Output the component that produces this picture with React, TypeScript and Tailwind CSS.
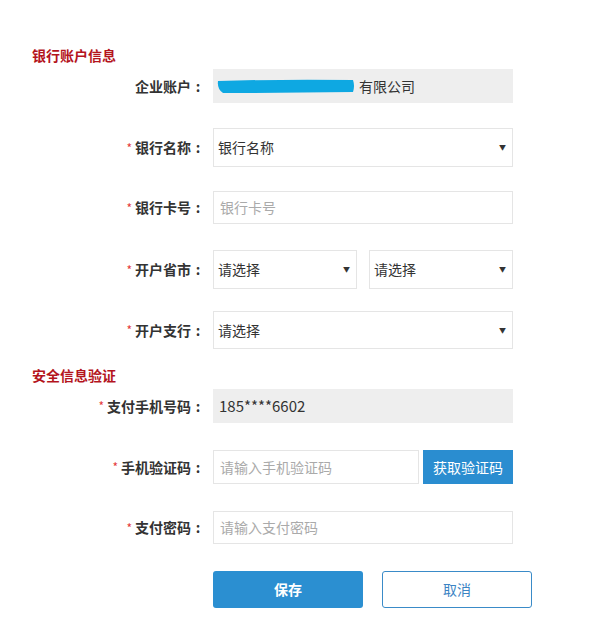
import React from "react";

const FONT = { fontFamily: '"Noto Sans CJK SC", "Noto Sans", sans-serif' };

function Label({ text, required }: { text: string; required?: boolean }) {
  return (
    <div className="flex w-[205px] shrink-0 items-center justify-end text-[14px] font-bold text-[#333]">
      {required && <span className="mr-[3px] text-[12px] font-normal text-[#e4393c]">*</span>}
      <span>{text}</span>
      <span className="inline-block w-[14px] text-center">:</span>
    </div>
  );
}

function Arrow() {
  return <span className="ml-auto text-[7px] leading-none text-[#333]">▼</span>;
}

function Select({ value, className }: { value: string; className: string }) {
  return (
    <div className={`flex items-center border border-[#e5e5e5] bg-white pl-[4px] pr-[6px] text-[14px] text-[#333] ${className}`}>
      <span>{value}</span>
      <Arrow />
    </div>
  );
}

function Input({ placeholder, className }: { placeholder: string; className: string }) {
  return (
    <div className={`flex items-center border border-[#e5e5e5] bg-white pl-[6px] text-[14px] text-[#aaa] ${className}`}>
      {placeholder}
    </div>
  );
}

function Scribble() {
  return (
    <svg width="142" height="18" viewBox="0 0 142 18" className="shrink-0">
      <path d="M4 4 Q70 2 139 3 Q141 9 139 15 Q70 16 9 16 Q3 12 4 4 Z" fill="#0ea8e2" />
    </svg>
  );
}

export default function App() {
  return (
    <div className="min-h-[639px] w-[612px] bg-white pt-[45px]" style={FONT}>
      <div className="flex h-[20px] items-center pl-[32px] text-[14px] font-bold text-[#b4141d]">银行账户信息</div>

      <div className="mt-[4px] flex h-[34px] items-center">
        <Label text="企业账户" />
        <div className="ml-[8px] flex h-full w-[300px] items-center bg-[#eeeeee] pl-[1px] text-[14px] text-[#333]">
          <Scribble />
          <span className="ml-[3px]">有限公司</span>
        </div>
      </div>

      <div className="mt-[25px] flex h-[39px] items-center">
        <Label text="银行名称" required />
        <Select value="银行名称" className="ml-[8px] h-full w-[300px]" />
      </div>

      <div className="mt-[24px] flex h-[33px] items-center">
        <Label text="银行卡号" required />
        <Input placeholder="银行卡号" className="ml-[8px] h-full w-[300px]" />
      </div>

      <div className="mt-[26px] flex h-[39px] items-center">
        <Label text="开户省市" required />
        <Select value="请选择" className="ml-[8px] h-full w-[144px]" />
        <Select value="请选择" className="ml-[12px] h-full w-[144px]" />
      </div>

      <div className="mt-[22px] flex h-[38px] items-center">
        <Label text="开户支行" required />
        <Select value="请选择" className="ml-[8px] h-full w-[300px]" />
      </div>

      <div className="mt-[16px] flex h-[20px] items-center pl-[32px] text-[14px] font-bold text-[#b4141d]">安全信息验证</div>

      <div className="mt-[4px] flex h-[34px] items-center">
        <Label text="支付手机号码" required />
        <div className="ml-[8px] flex h-full w-[300px] items-center bg-[#eeeeee] pl-[6px] text-[15px] text-[#333]">185****6602</div>
      </div>

      <div className="mt-[27px] flex h-[34px] items-center">
        <Label text="手机验证码" required />
        <Input placeholder="请输入手机验证码" className="ml-[8px] h-full w-[206px]" />
        <button className="ml-[4px] h-full w-[90px] bg-[#2a8dd0] text-[14px] text-white">获取验证码</button>
      </div>

      <div className="mt-[27px] flex h-[33px] items-center">
        <Label text="支付密码" required />
        <Input placeholder="请输入支付密码" className="ml-[8px] h-full w-[300px]" />
      </div>

      <div className="mt-[27px] flex h-[37px] pl-[213px]">
        <button className="h-full w-[150px] rounded-[3px] bg-[#2b8fd1] text-[14px] font-bold text-white">保存</button>
        <button className="ml-[19px] h-full w-[150px] rounded-[3px] border border-[#3a8bc8] bg-white text-[14px] text-[#3b84c4]">取消</button>
      </div>
    </div>
  );
}
